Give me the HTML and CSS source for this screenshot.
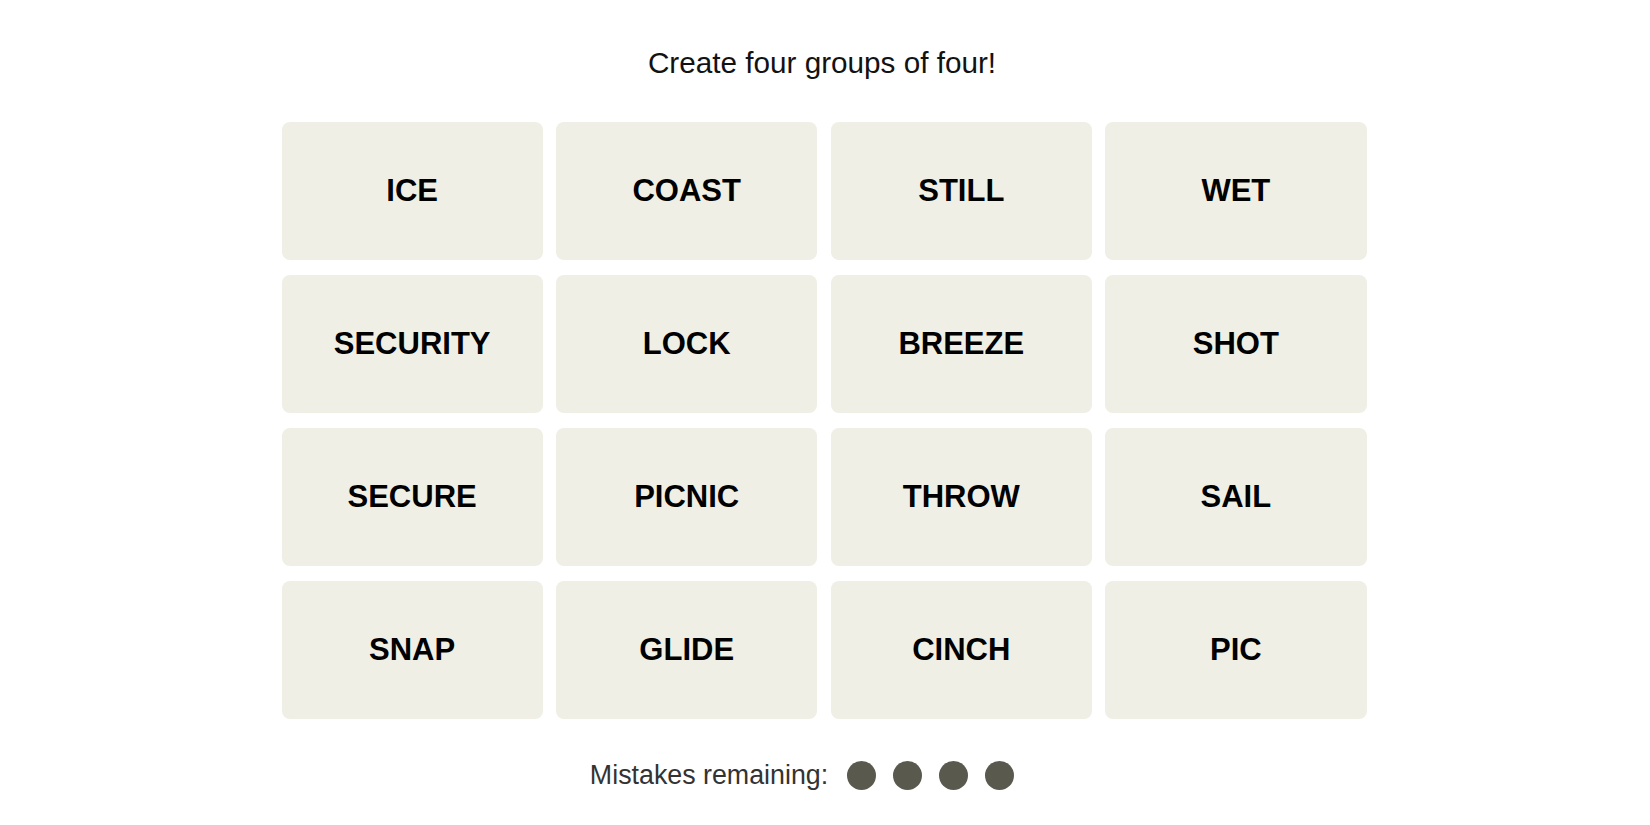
FILE: index.html
```html
<!DOCTYPE html>
<html lang="en">
<head>
<meta charset="utf-8">
<title>Connections</title>
<link rel="stylesheet" href="styles.css">
</head>
<body>
<main class="game">
  <p class="title">Create four groups of four!</p>
  <div class="board">
    <button class="tile">ICE</button>
    <button class="tile">COAST</button>
    <button class="tile">STILL</button>
    <button class="tile">WET</button>
    <button class="tile">SECURITY</button>
    <button class="tile">LOCK</button>
    <button class="tile">BREEZE</button>
    <button class="tile">SHOT</button>
    <button class="tile">SECURE</button>
    <button class="tile">PICNIC</button>
    <button class="tile">THROW</button>
    <button class="tile">SAIL</button>
    <button class="tile">SNAP</button>
    <button class="tile">GLIDE</button>
    <button class="tile">CINCH</button>
    <button class="tile">PIC</button>
  </div>
  <div class="mistakes">
    <span class="mistakes-label">Mistakes remaining:</span>
    <span class="dots">
      <span class="dot"></span>
      <span class="dot"></span>
      <span class="dot"></span>
      <span class="dot"></span>
    </span>
  </div>
</main>
</body>
</html>
```
FILE: styles.css
```css
html, body {
  margin: 0;
  padding: 0;
  background: #ffffff;
}

.game {
  display: flex;
  flex-direction: column;
  align-items: center;
  font-family: "Liberation Sans", Arial, sans-serif;
}

.title {
  margin: 45px 6px 0 0;
  font-size: 29.7px;
  line-height: 36px;
  font-weight: 400;
  color: #121212;
}

.board {
  margin: 41px 2px 0 0;
  width: 1085px;
  display: grid;
  grid-template-columns: repeat(4, 1fr);
  grid-auto-rows: 138px;
  column-gap: 13.33px;
  row-gap: 15px;
}

.tile {
  border: none;
  border-radius: 8px;
  background: #efefe6;
  color: #000000;
  font-family: "Liberation Sans", Arial, sans-serif;
  font-weight: 700;
  font-size: 31px;
  padding: 0;
  display: flex;
  align-items: center;
  justify-content: center;
}

.mistakes {
  margin: 42px 46px 0 0;
  display: flex;
  align-items: center;
  height: 29px;
  gap: 19px;
}

.mistakes-label {
  font-size: 26.8px;
  line-height: 29px;
  color: #333333;
}

.dots {
  display: flex;
  gap: 17px;
}

.dot {
  flex: none;
  width: 29px;
  height: 29px;
  border-radius: 50%;
  background: #5a594e;
}
```
